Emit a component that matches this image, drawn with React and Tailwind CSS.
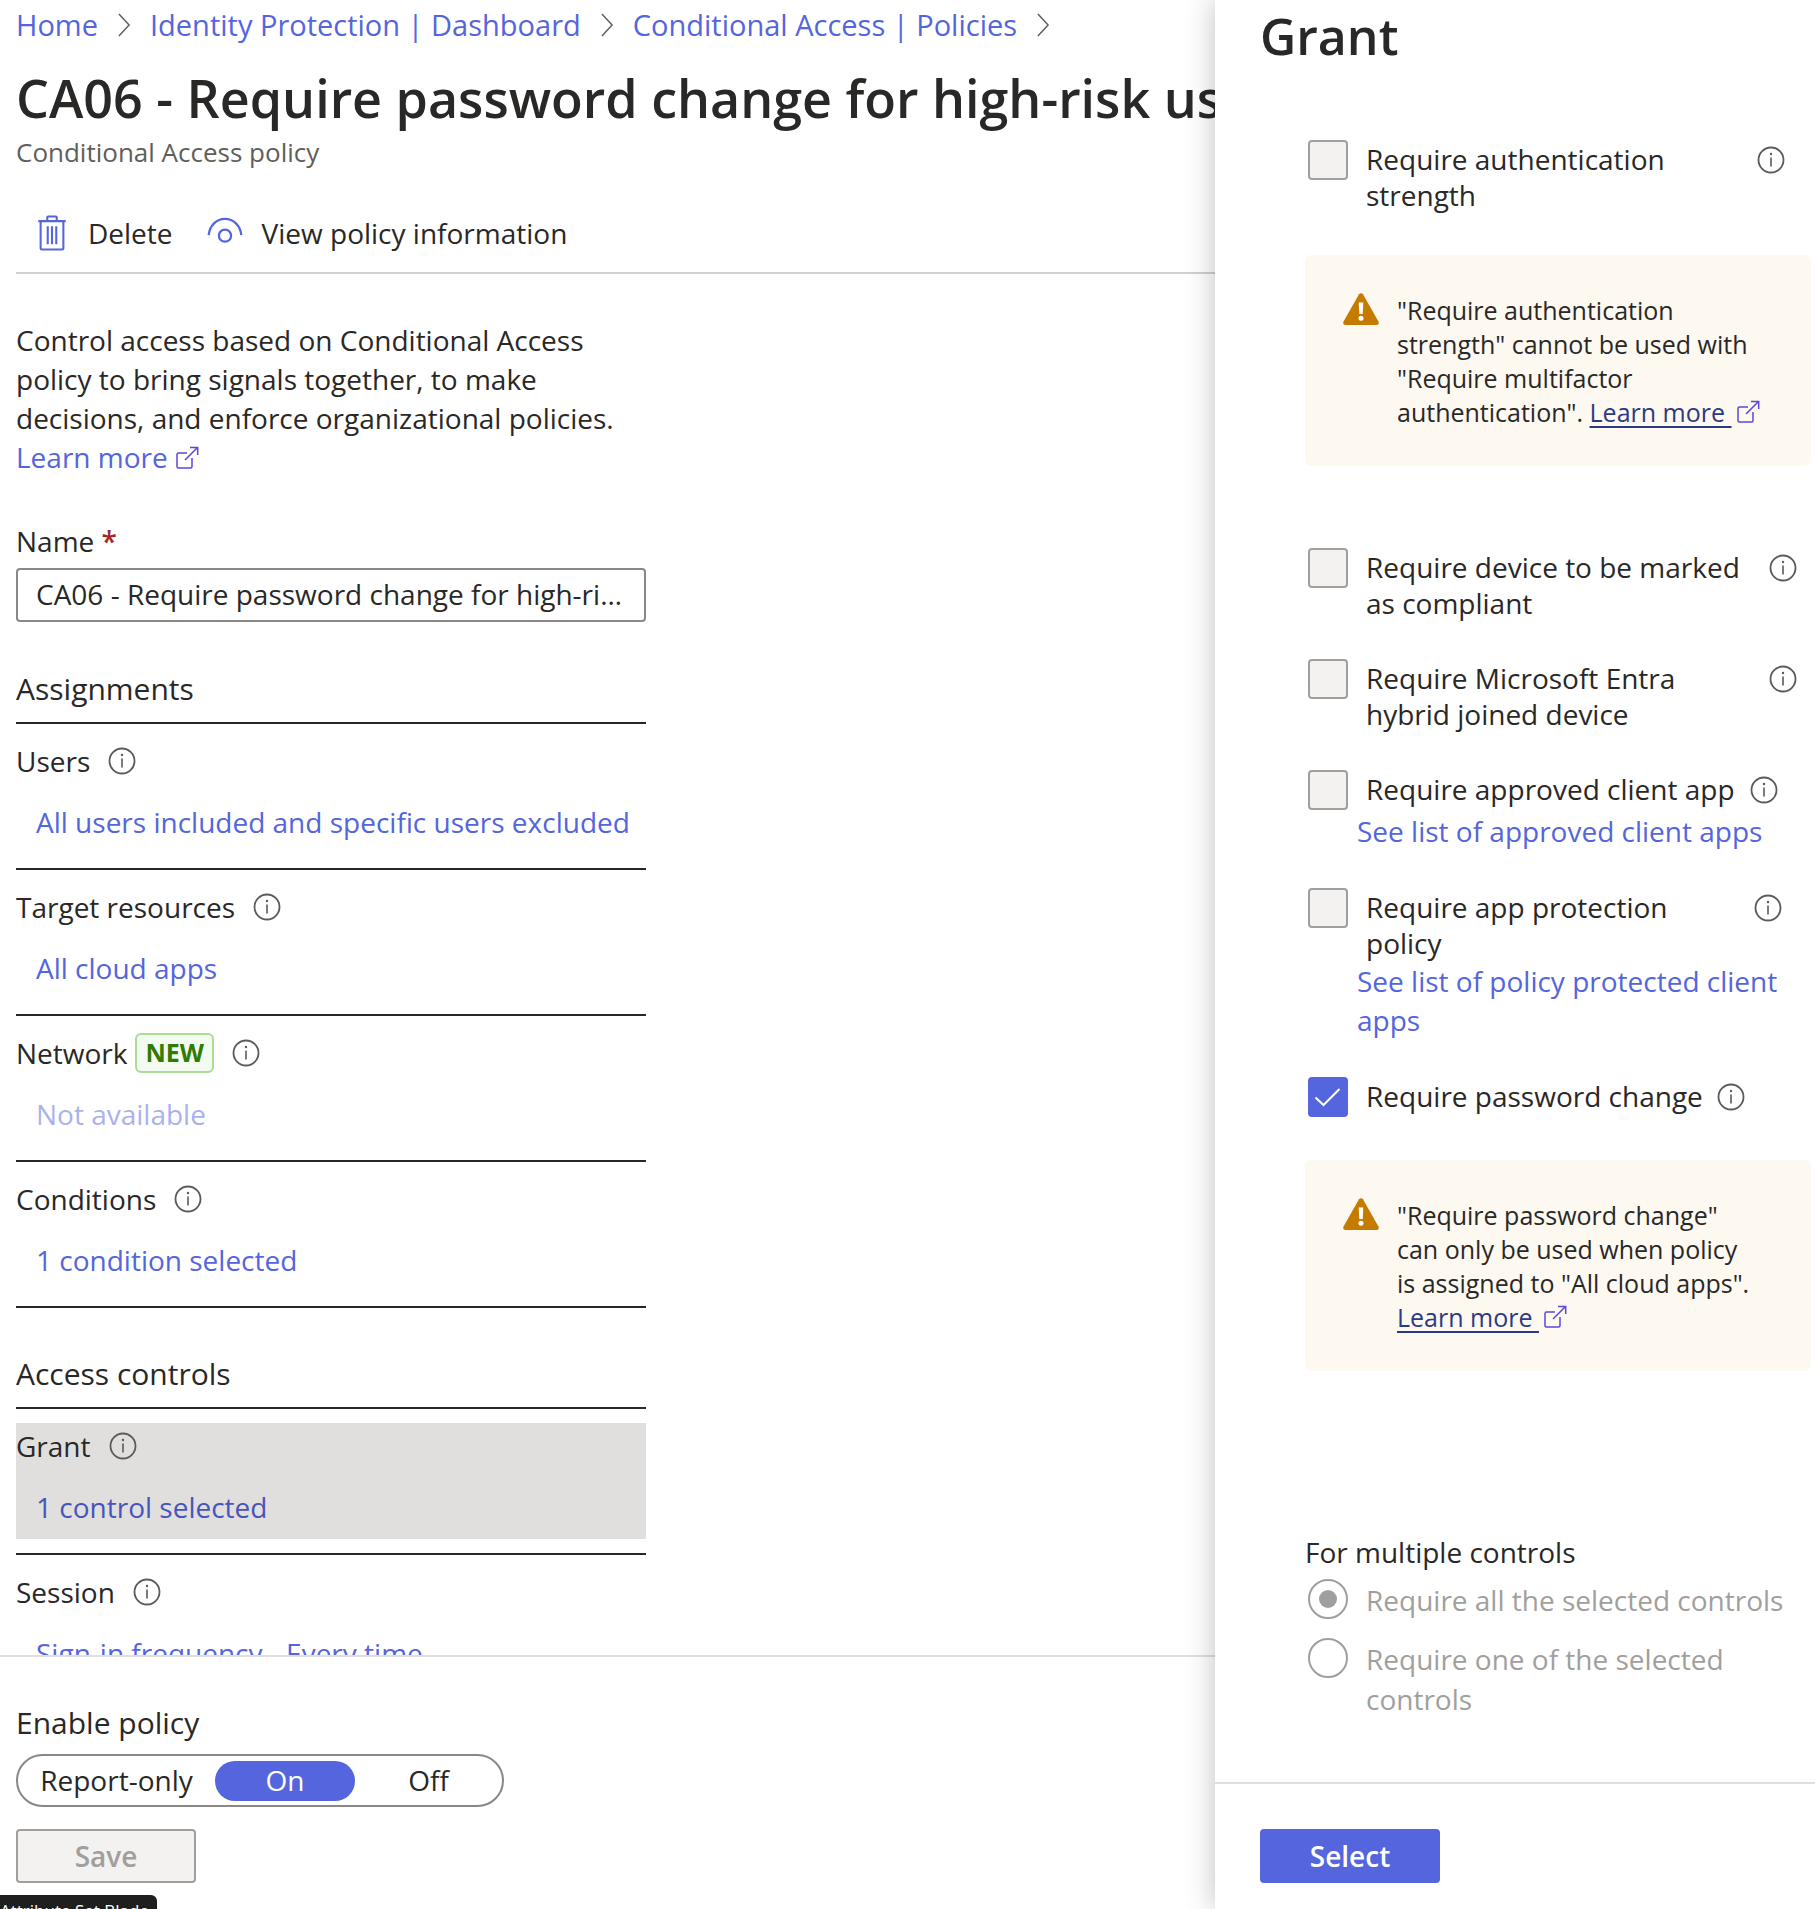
import { useState } from "react";

function InfoIcon() {
  return (
    <svg viewBox="0 0 28 28" className="size-7 shrink-0" fill="none" aria-hidden="true">
      <circle cx="14" cy="14" r="12.5" stroke="#5c5a58" strokeWidth="1.8" />
      <path d="M14 11.5v9" stroke="#5c5a58" strokeWidth="1.6" />
      <circle cx="14" cy="8" r="1.2" fill="#5c5a58" />
    </svg>
  );
}

function ExternalIcon({ className }) {
  return (
    <svg viewBox="0 0 24 24" className={`inline-block size-6 ${className}`} fill="none" stroke="#5b45e0" strokeWidth="1.5" aria-hidden="true">
      <path d="M12 7H3.5Q2 7 2 8.500V20.500Q2 22 3.500 22H15.500Q17 22 17 20.500V12" />
      <path d="M10 14 22.500 1.500M15 1.500H22.700V9" />
    </svg>
  );
}

function TrashIcon() {
  return (
    <svg viewBox="0 0 30 38" className="h-9 w-8" fill="none" stroke="#5465dd" strokeWidth="2.2" aria-hidden="true">
      <path d="M0.500 6.500H29.500M10 6V2.500Q10 1.500 11 1.500H19Q20 1.500 20 2.500V6" />
      <path d="M3 7V35Q3 36.500 4.500 36.500H25.500Q27 36.500 27 35V7" />
      <path d="M10.500 12V31M15 12V31M19.500 12V31" />
    </svg>
  );
}

function EyeIcon() {
  return (
    <svg viewBox="0 0 38 30" className="mb-1 h-7 w-9" fill="none" stroke="#5465dd" strokeWidth="2.4" aria-hidden="true">
      <path d="M1.500 19.500C2.500 9 10 2 19 2S35.500 9 36.500 19.500" />
      <circle cx="19" cy="20" r="6.500" />
    </svg>
  );
}

function WarningIcon() {
  return (
    <svg viewBox="0 0 36 32" className="h-8 w-9 shrink-0" aria-hidden="true">
      <path d="M16 1.300Q18 -1 20 1.300L35.600 28.800Q36.500 32 33.500 32H2.500Q-0.500 32 0.400 28.800Z" fill="#c57b00" />
      <path d="M15.700 9.500H20.300L19.700 21H16.300Z" fill="#fff" />
      <circle cx="18" cy="25.300" r="2.500" fill="#fff" />
    </svg>
  );
}

function Chevron() {
  return (
    <svg viewBox="0 0 14 26" className="h-6 w-3.5 shrink-0" fill="none" stroke="#605e5c" strokeWidth="1.600" aria-hidden="true">
      <path d="M1.500 1 12.500 13 1.500 25" />
    </svg>
  );
}

function Setting({ name, badge, value, disabled, selected }) {
  return (
    <div className="border-b-2 border-[#292827] py-3.5">
      <div className={`h-[116px] pt-[3px] ${selected ? "bg-[#e1dfdd]" : ""}`}>
        <div className="flex h-10 items-center">
          <span>{name}</span>
          {badge && (
            <span className="ml-2 flex h-10 items-center rounded-md border-2 border-[#a7dd94] bg-[#f3faf0] px-2 text-[25px] font-bold text-[#317a03]">
              {badge}
            </span>
          )}
          <span className="ml-4.5"><InfoIcon /></span>
        </div>
        <a
          href="#"
          className={`ml-5 mt-[21px] block leading-10 whitespace-nowrap ${disabled ? "text-[#aab2ee]" : selected ? "text-[#4655bd]" : "text-[#5465dd]"}`}
        >
          {value}
        </a>
      </div>
    </div>
  );
}

function Check({ id, label, checked, infoClass, labelClass }) {
  return (
    <div className="flex items-start">
      <span className="relative ml-[3px] size-10 shrink-0">
        <input
          id={id}
          type="checkbox"
          defaultChecked={checked}
          disabled={!checked}
          className="peer block size-10 appearance-none rounded-sm border-2 border-[#a19f9d] bg-[#f3f2f1] checked:border-[#5465dd] checked:bg-[#5465dd]"
        />
        <svg viewBox="0 0 40 40" className="pointer-events-none absolute inset-0 hidden size-10 peer-checked:block" fill="none" stroke="#fff" strokeWidth="2" aria-hidden="true">
          <path d="M7.500 20.500 15.500 28 31.500 12" />
        </svg>
      </span>
      <label htmlFor={id} className={`ml-4.5 pt-px pb-px leading-9 whitespace-nowrap ${labelClass}`}>{label}</label>
      <span className={`pt-1.5 ${infoClass}`}><InfoIcon /></span>
    </div>
  );
}

function Warning({ children }) {
  return (
    <div className="mr-1 flex h-[211px] gap-4.5 rounded-md bg-[#fdf8f0] pt-[38px] pr-6 pl-[38px]">
      <WarningIcon />
      <p className="text-[25px] leading-[34px] whitespace-nowrap">{children}</p>
    </div>
  );
}

function WarningLink() {
  return (
    <a href="#">
      <span className="text-[#2b3a85] underline decoration-2 underline-offset-4">Learn more&nbsp;</span>
      <ExternalIcon className="ml-1 align-[-2px]" />
    </a>
  );
}

function Radio({ id, label, checked }) {
  return (
    <div className="flex items-start text-[#a19f9d]">
      <input
        id={id}
        type="radio"
        name="multiple"
        defaultChecked={checked}
        disabled
        className="ml-[3px] grid size-10 shrink-0 appearance-none place-items-center rounded-full border-2 border-[#a19f9d] before:size-[18px] before:rounded-full checked:before:bg-[#a19f9d]"
      />
      <label htmlFor={id} className="ml-4.5 pt-px pb-px leading-10">{label}</label>
    </div>
  );
}

export default function App() {
  const [mode, setMode] = useState("On");
  const modes = ["Report-only", "On", "Off"];
  return (
    <div className="relative flex h-screen overflow-hidden bg-white font-['Open_Sans',sans-serif] text-[28px] text-[#292827]">
      <main className="flex min-w-0 flex-1 flex-col">
        <div className="min-h-0 flex-1 overflow-hidden pl-4">
          <nav className="flex h-[50px] items-center gap-[19px] text-[29px] whitespace-nowrap text-[#5465dd]" aria-label="Breadcrumb">
            <a href="#">Home</a>
            <Chevron />
            <a href="#">Identity Protection | Dashboard</a>
            <Chevron />
            <a href="#">Conditional Access | Policies</a>
            <Chevron />
          </nav>
          <h1 className="mt-3 text-[52px] leading-[72px] font-semibold whitespace-nowrap">
            CA06 - Require password change for high-risk users
          </h1>
          <p className="text-[26px] leading-9 text-[#605e5c]">Conditional Access policy</p>
          <div className="mt-6 flex h-20 items-center gap-8.5 border-b-2 border-[#d2d0ce] pl-5">
            <button type="button" className="flex items-center gap-5"><TrashIcon />Delete</button>
            <button type="button" className="flex items-center gap-[19px]"><EyeIcon />View policy information</button>
          </div>
          <div className="w-[630px]">
            <p className="mt-[47px] leading-[39px] whitespace-nowrap">
              Control access based on Conditional Access<br />
              policy to bring signals together, to make<br />
              decisions, and enforce organizational policies.<br />
              <a href="#" className="text-[#5465dd]">Learn more <ExternalIcon className="align-[-2px]" /></a>
            </p>
            <label htmlFor="name" className="mt-11 block leading-10">
              Name <span className="font-semibold text-[#a4262c]">*</span>
            </label>
            <input
              id="name"
              type="text"
              defaultValue="CA06 - Require password change for high-risk users"
              className="mt-[7px] block h-[54px] w-full rounded-sm border-2 border-[#8a8886] px-4.5 pb-0.5 text-ellipsis"
            />
            <h2 className="mt-[47px] border-b-2 border-[#292827] pb-[13px] text-[30px] leading-10">Assignments</h2>
            <Setting name="Users" value="All users included and specific users excluded" />
            <Setting name="Target resources" value="All cloud apps" />
            <Setting name="Network" badge="NEW" value="Not available" disabled />
            <Setting name="Conditions" value="1 condition selected" />
            <h2 className="mt-[46px] border-b-2 border-[#292827] pb-[13px] text-[30px] leading-10">Access controls</h2>
            <Setting name="Grant" value="1 control selected" selected />
            <Setting name="Session" value="Sign-in frequency - Every time" />
          </div>
        </div>
        <footer className="h-[254px] shrink-0 border-t-2 border-[#e1dfdd] pt-[46px] pl-4">
          <div id="enable" className="text-[30px] leading-10">Enable policy</div>
          <div role="group" aria-labelledby="enable" className="mt-[11px] flex h-[53px] w-[488px] items-center rounded-full border-2 border-[#8a8886]">
            {modes.map((m) => (
              <button
                key={m}
                type="button"
                aria-pressed={mode === m}
                onClick={() => setMode(m)}
                className={`h-10 rounded-full pb-0.5 leading-9 ${m === "Report-only" ? "w-[197px]" : m === "On" ? "w-[140px]" : "w-[147px]"} ${mode === m ? "bg-[#5465dd] text-white" : ""}`}
              >
                {m}
              </button>
            ))}
          </div>
          <button type="button" disabled className="mt-[22px] h-[54px] w-[180px] rounded-sm border-2 border-[#a19f9d] bg-[#f3f2f1] font-semibold text-[#a19f9d]">
            Save
          </button>
        </footer>
      </main>

      <aside className="relative flex w-[600px] shrink-0 flex-col bg-white shadow-[0_0_28px_rgba(0,0,0,0.25)]">
        <div className="min-h-0 flex-1 overflow-hidden">
          <h2 className="pl-[45px] text-[50px] leading-[72px] font-semibold">Grant</h2>
          <div className="pt-[68px] pl-[90px]">
            <Check id="strength" label={<>Require authentication<br />strength</>} labelClass="w-[391px]" />
            <div className="mt-[41px]">
              <Warning>
                "Require authentication<br />strength" cannot be used with<br />"Require multifactor<br />authentication". <WarningLink />
              </Warning>
            </div>
            <div className="mt-[82px] flex flex-col gap-[37px]">
              <Check id="compliant" label={<>Require device to be marked<br />as compliant</>} labelClass="w-[403px]" />
              <Check id="hybrid" label={<>Require Microsoft Entra<br />hybrid joined device</>} labelClass="w-[403px]" />
              <div>
                <Check id="approved" label="Require approved client app" labelClass="w-[384px]" />
                <a href="#" className="ml-[52px] mt-0.5 block leading-[39px] text-[#5465dd]">See list of approved client apps</a>
              </div>
              <div>
                <Check id="protection" label={<>Require app protection<br />policy</>} labelClass="w-[388px]" />
                <a href="#" className="ml-[52px] block leading-[39px] text-[#5465dd]">See list of policy protected client<br />apps</a>
              </div>
              <Check id="password" label="Require password change" checked infoClass="ml-3.5" />
            </div>
            <div className="mt-[43px]">
              <Warning>
                "Require password change"<br />can only be used when policy<br />is assigned to "All cloud apps".<br /><WarningLink />
              </Warning>
            </div>
            <fieldset className="mt-[161px]">
              <legend className="leading-10">For multiple controls</legend>
              <div className="mt-[7px] flex flex-col gap-[17px]">
                <Radio id="all" label="Require all the selected controls" checked />
                <Radio id="one" label={<>Require one of the selected<br />controls</>} />
              </div>
            </fieldset>
          </div>
        </div>
        <footer className="h-[127px] shrink-0 border-t-2 border-[#e1dfdd] pt-[45px] pl-[45px]">
          <button type="button" className="h-[54px] w-[180px] rounded-sm bg-[#5465dd] font-semibold text-white">Select</button>
        </footer>
      </aside>

      <div role="tooltip" className="absolute bottom-0 left-0 h-3.5 w-[157px] overflow-hidden rounded-tr-md bg-[#1f1f1f] pt-1 text-[17px] leading-6 whitespace-nowrap text-white">
        Attribute Set Blade
      </div>
    </div>
  );
}
